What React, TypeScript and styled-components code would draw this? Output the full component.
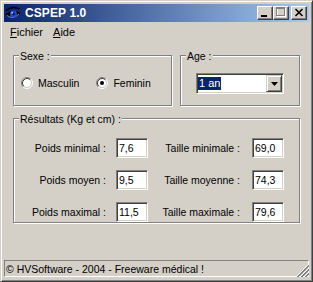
import React from "react";
import styled, { createGlobalStyle } from "styled-components";

const GlobalStyle = createGlobalStyle`
  html, body {
    margin: 0;
    padding: 0;
    background: #d4d0c8;
  }
  body {
    font-family: "Liberation Sans", Arial, sans-serif;
    font-size: 10.5px;
    color: #000;
  }
`;

const Window = styled.div`
  box-sizing: border-box;
  width: 313px;
  height: 282px;
  display: flex;
  flex-direction: column;
  background: #d4d0c8;
  border: 1px solid;
  border-color: #d4d0c8 #404040 #404040 #d4d0c8;
  box-shadow: inset 1px 1px #fff, inset -1px -1px #808080;
  padding: 3px;
`;

const TitleBar = styled.div`
  height: 18px;
  display: flex;
  align-items: center;
  padding: 0 2px 0 1px;
  background: linear-gradient(to right, #0a246a, #a6caf0);
`;

const TitleText = styled.span`
  margin-left: 4px;
  flex: 1;
  color: #fff;
  font-weight: bold;
  font-size: 12px;
  letter-spacing: 0.1px;
`;

const CaptionButton = styled.div<{ $gap?: boolean }>`
  box-sizing: border-box;
  width: 16px;
  height: 14px;
  margin-left: ${(p) => (p.$gap ? "2px" : "0")};
  display: flex;
  background: #d4d0c8;
  border: 1px solid;
  border-color: #fff #404040 #404040 #fff;
  box-shadow: inset -1px -1px #808080;
`;

const MenuBar = styled.div`
  height: 19px;
  display: flex;
  align-items: center;
  padding-left: 1px;
  font-size: 11px;
`;

const MenuItem = styled.span`
  padding: 0 5px;
`;

const Key = styled.span`
  text-decoration: underline;
`;

const Body = styled.div`
  display: flex;
  flex-direction: column;
  padding: 14px 9px 0 9px;
`;

const TopRow = styled.div`
  display: flex;
  gap: 8px;
`;

const Group = styled.div<{ $w?: number; $h: number }>`
  position: relative;
  box-sizing: border-box;
  width: ${(p) => (p.$w ? `${p.$w}px` : "auto")};
  flex: ${(p) => (p.$w ? "none" : "1")};
  height: ${(p) => p.$h}px;
  border: 1px solid #808080;
  box-shadow: inset 1px 1px #fff, 1px 1px #fff;
`;

const Legend = styled.span`
  position: absolute;
  top: -6px;
  left: 5px;
  padding: 0 1px;
  line-height: 13px;
  background: #d4d0c8;
`;

const RadioRow = styled.div`
  display: flex;
  align-items: center;
  gap: 17px;
  height: 100%;
  box-sizing: border-box;
  padding: 5px 0 0 7px;
`;

const RadioOption = styled.label`
  display: flex;
  align-items: center;
  gap: 5px;
`;

const ComboWrap = styled.div`
  padding: 17px 0 0 15px;
`;

const Combo = styled.div`
  box-sizing: border-box;
  width: 88px;
  height: 21px;
  display: flex;
  align-items: center;
  background: #fff;
  border: 1px solid;
  border-color: #808080 #fff #fff #808080;
  box-shadow: inset 1px 1px #404040, inset -1px -1px #d4d0c8;
  padding: 1px;
`;

const Selected = styled.span`
  flex: 1;
  display: flex;
`;

const SelText = styled.span`
  background: #0a246a;
  color: #fff;
  padding: 0 1px;
  line-height: 13px;
  font-size: 11px;
`;

const DropButton = styled.div`
  box-sizing: border-box;
  width: 16px;
  height: 17px;
  display: flex;
  align-items: center;
  justify-content: center;
  background: #d4d0c8;
  border: 1px solid;
  border-color: #d4d0c8 #404040 #404040 #d4d0c8;
  box-shadow: inset 1px 1px #fff, inset -1px -1px #808080;
`;

const ResultsGrid = styled.div`
  display: grid;
  grid-template-columns: 102px 32px 104px 32px;
  grid-auto-rows: 20px;
  row-gap: 12px;
  padding-top: 19px;
`;

const FieldLabel = styled.span<{ $pad: number }>`
  display: flex;
  align-items: center;
  justify-content: flex-end;
  padding-right: ${(p) => p.$pad}px;
`;

const Field = styled.div`
  box-sizing: border-box;
  display: flex;
  align-items: center;
  background: #fff;
  border: 1px solid;
  border-color: #808080 #fff #fff #808080;
  box-shadow: inset 1px 1px #404040, inset -1px -1px #d4d0c8;
  padding-left: 2px;
`;

const StatusBar = styled.div`
  position: relative;
  box-sizing: border-box;
  margin-top: auto;
  margin-bottom: 1px;
  height: 17px;
  display: flex;
  align-items: center;
  padding-left: 1px;
  border: 1px solid;
  border-color: #808080 #fff #fff #808080;
`;

const Grip = styled.svg`
  position: absolute;
  right: -1px;
  bottom: -1px;
`;

const Radio: React.FC<{ checked?: boolean }> = ({ checked }) => (
  <svg width="12" height="12" viewBox="0 0 12 12">
    <circle cx="6" cy="6" r="4" fill="#fff" />
    <path d="M2.11 9.89 A5.5 5.5 0 0 1 9.89 2.11" fill="none" stroke="#808080" />
    <path d="M9.89 2.11 A5.5 5.5 0 0 1 2.11 9.89" fill="none" stroke="#fff" />
    <path d="M2.82 9.18 A4.5 4.5 0 0 1 9.18 2.82" fill="none" stroke="#404040" />
    <path d="M9.18 2.82 A4.5 4.5 0 0 1 2.82 9.18" fill="none" stroke="#d4d0c8" />
    {checked && <circle cx="6" cy="6" r="2" fill="#000" />}
  </svg>
);

const EyeIcon = () => (
  <svg width="16" height="16" viewBox="0 0 16 16">
    <path d="M1 5.5 Q7 0.5 14.5 4" fill="none" stroke="#000" strokeWidth="1.6" />
    <path d="M0.5 9.5 Q7 3 15.5 8 Q8 15.5 0.5 9.5Z" fill="#000" />
    <path d="M2 10.5 Q8 15 14 9" fill="none" stroke="#9aa4c8" strokeWidth="0.8" />
    <circle cx="8.5" cy="9" r="3.4" fill="#2c4ad8" />
    <circle cx="8.5" cy="9" r="1.4" fill="#0a1660" />
    <circle cx="7.2" cy="7.8" r="0.9" fill="#c8d4ff" />
  </svg>
);

const data = [
  ["Poids minimal :", "7,6", "Taille minimale :", "69,0"],
  ["Poids moyen :", "9,5", "Taille moyenne :", "74,3"],
  ["Poids maximal :", "11,5", "Taille maximale :", "79,6"],
];

export default function App() {
  return (
    <>
      <GlobalStyle />
      <Window>
        <TitleBar>
          <EyeIcon />
          <TitleText>CSPEP 1.0</TitleText>
          <CaptionButton>
            <svg width="14" height="12" viewBox="0 0 14 12">
              <rect x="3" y="8" width="6" height="2" fill="#000" />
            </svg>
          </CaptionButton>
          <CaptionButton>
            <svg width="14" height="12" viewBox="0 0 14 12">
              <rect x="3.5" y="1.5" width="8" height="8" fill="none" stroke="#fff" />
              <rect x="2.5" y="0.5" width="8" height="8" fill="none" stroke="#808080" />
              <rect x="2" y="1" width="9" height="1" fill="#808080" />
            </svg>
          </CaptionButton>
          <CaptionButton $gap>
            <svg width="14" height="12" viewBox="0 0 14 12">
              <path d="M3.5 2 L10.5 9 M10.5 2 L3.5 9" stroke="#000" strokeWidth="1.6" />
            </svg>
          </CaptionButton>
        </TitleBar>

        <MenuBar>
          <MenuItem>
            <Key>F</Key>ichier
          </MenuItem>
          <MenuItem>
            <Key>A</Key>ide
          </MenuItem>
        </MenuBar>

        <Body>
          <TopRow>
            <Group $w={159} $h={51}>
              <Legend>Sexe :</Legend>
              <RadioRow>
                <RadioOption>
                  <Radio />
                  Masculin
                </RadioOption>
                <RadioOption>
                  <Radio checked />
                  Feminin
                </RadioOption>
              </RadioRow>
            </Group>
            <Group $h={51}>
              <Legend>Age :</Legend>
              <ComboWrap>
                <Combo>
                  <Selected>
                    <SelText>1 an</SelText>
                  </Selected>
                  <DropButton>
                    <svg width="7" height="4" viewBox="0 0 7 4">
                      <path d="M0 0 H7 L3.5 4Z" fill="#000" />
                    </svg>
                  </DropButton>
                </Combo>
              </ComboWrap>
            </Group>
          </TopRow>

          <Group $h={124} style={{ marginTop: 12 }}>
            <Legend>Résultats (Kg et cm) :</Legend>
            <ResultsGrid>
              {data.map(([l1, v1, l2, v2]) => (
                <React.Fragment key={l1}>
                  <FieldLabel $pad={10}>{l1}</FieldLabel>
                  <Field>{v1}</Field>
                  <FieldLabel $pad={12}>{l2}</FieldLabel>
                  <Field>{v2}</Field>
                </React.Fragment>
              ))}
            </ResultsGrid>
          </Group>
        </Body>

        <StatusBar>
          © HVSoftware - 2004 - Freeware médical !
          <Grip width="13" height="13" viewBox="0 0 13 13">
            <path d="M12 1 L1 12 M12 5 L5 12 M12 9 L9 12" stroke="#fff" />
            <path d="M13 1 L1 13 M13 2 L2 13 M13 5 L5 13 M13 6 L6 13 M13 9 L9 13 M13 10 L10 13" stroke="#808080" />
          </Grip>
        </StatusBar>
      </Window>
    </>
  );
}
